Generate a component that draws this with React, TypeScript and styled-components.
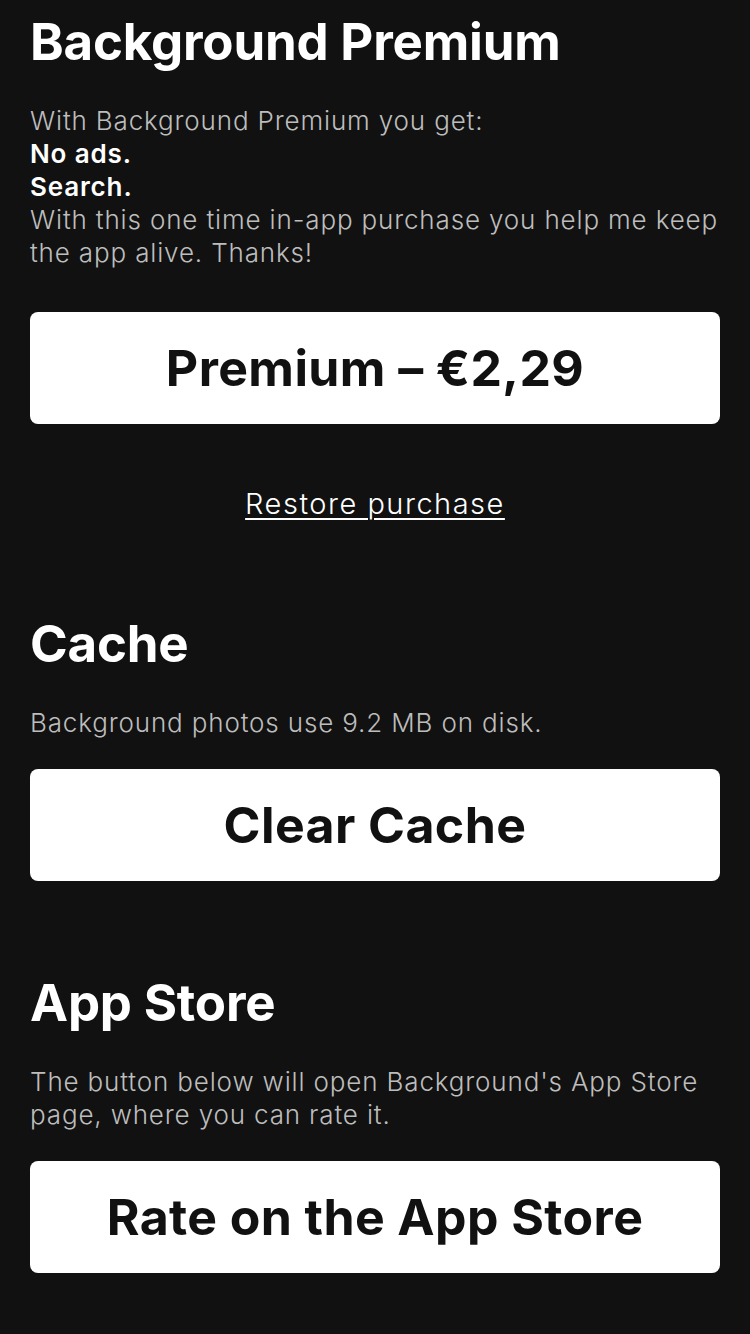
import React from 'react';
import styled, {createGlobalStyle} from 'styled-components';

const GlobalStyle = createGlobalStyle`
  html, body {
    margin: 0;
    padding: 0;
    background: #111111;
  }
  body {
    font-family: Inter, "Noto Sans", "Liberation Sans", sans-serif;
    -webkit-font-smoothing: antialiased;
  }
`;

const Page = styled.div`
  min-height: 1334px;
  box-sizing: border-box;
  padding: 12px 30px 0 30px;
  background: #111111;
  color: #ffffff;
`;

const Section = styled.section<{$gap?: number}>`
  display: flex;
  flex-direction: column;
  margin-top: ${p => p.$gap ?? 0}px;
`;

const Heading = styled.h1`
  margin: 0;
  font-size: 51px;
  line-height: 60px;
  font-weight: 700;
  letter-spacing: -0.2px;
  color: #ffffff;
`;

const Text = styled.p`
  margin: 32px -12px 0 0;
  font-size: 26px;
  line-height: 33px;
  font-weight: 300;
  letter-spacing: 0.85px;
  color: #bdbdbd;
`;

const Strong = styled.span`
  display: block;
  font-weight: 600;
  color: #ffffff;
`;

const ActionButton = styled.button<{$gap: number}>`
  margin-top: ${p => p.$gap}px;
  width: 100%;
  height: 112px;
  border: none;
  border-radius: 8px;
  background: #ffffff;
  color: #111111;
  font-family: inherit;
  font-size: 50px;
  font-weight: 700;
  letter-spacing: 0.4px;
  cursor: pointer;
`;

const RestoreLink = styled.a`
  align-self: center;
  margin-top: 62px;
  font-size: 29px;
  line-height: 36px;
  font-weight: 300;
  letter-spacing: 1.5px;
  color: #ffffff;
  text-decoration: underline;
  text-underline-offset: 4px;
  text-decoration-thickness: 2px;
`;

const App = () => {
    return (
        <>
            <GlobalStyle/>
            <Page>
                <Section>
                    <Heading>Background Premium</Heading>
                    <Text>
                        With Background Premium you get:
                        <Strong>No ads.</Strong>
                        <Strong>Search.</Strong>
                        With this one time in-app purchase you help me keep the app alive. Thanks!
                    </Text>
                    <ActionButton $gap={43}>Premium – €2,29</ActionButton>
                    <RestoreLink>Restore purchase</RestoreLink>
                </Section>
                <Section $gap={92}>
                    <Heading>Cache</Heading>
                    <Text>Background photos use 9.2 MB on disk.</Text>
                    <ActionButton $gap={30}>Clear Cache</ActionButton>
                </Section>
                <Section $gap={92}>
                    <Heading>App Store</Heading>
                    <Text>The button below will open Background's App Store page, where you can rate it.</Text>
                    <ActionButton $gap={30}>Rate on the App Store</ActionButton>
                </Section>
            </Page>
        </>
    );
};

export default App;
